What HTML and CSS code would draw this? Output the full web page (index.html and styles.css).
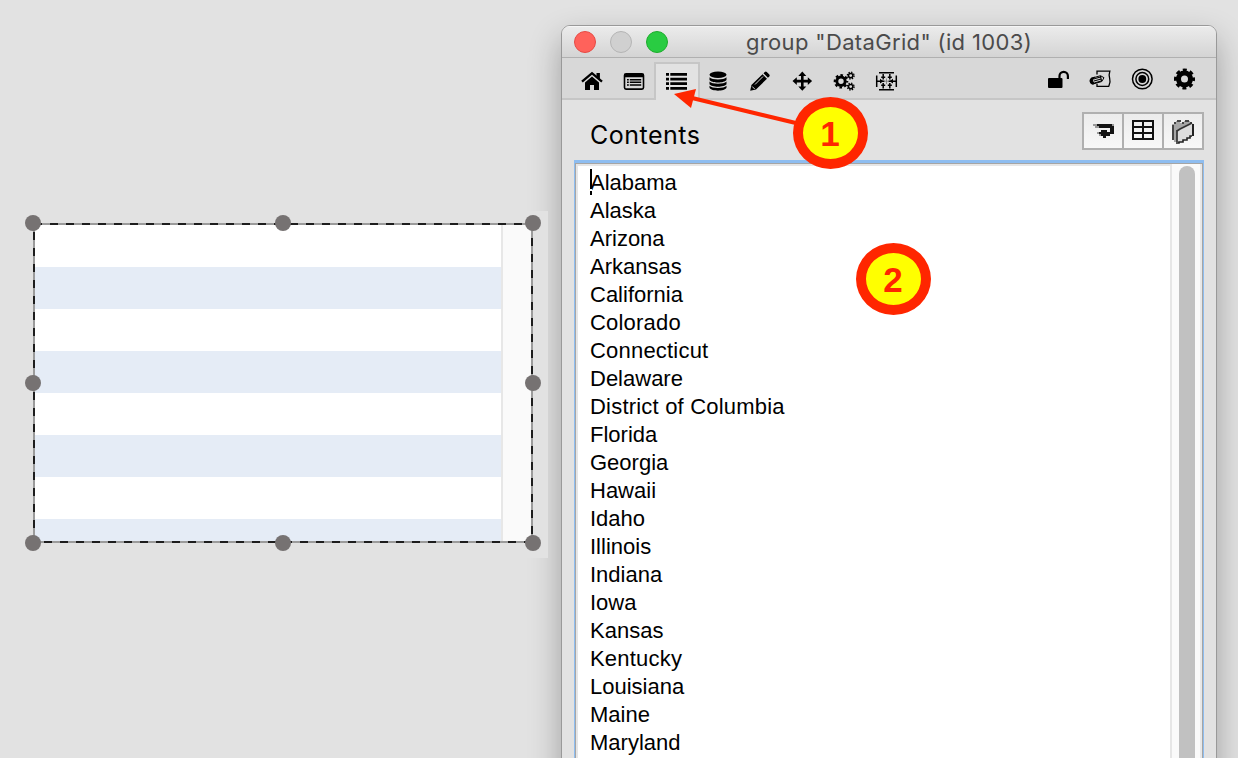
FILE: index.html
```
<!DOCTYPE html>
<html lang="en">
<head>
<meta charset="utf-8">
<title>group "DataGrid" (id 1003)</title>
<link rel="stylesheet" href="styles.css">
</head>
<body>
<main class="desktop">
  <section class="inspector">
    <header class="titlebar">
      <div class="lights"><i class="light close"></i><i class="light minimize"></i><i class="light expand"></i></div>
      <h1 class="title">group "DataGrid" (id 1003)</h1>
    </header>
    <nav class="toolbar">
      <div class="tools">
        <span class="tool"><svg viewBox="0 0 24 24"><path d="M2 12.700 12 4.200 22 12.700" fill="none" stroke="#000" stroke-width="2.400"/><path d="M16.500 4h3.400v7l-3.400-3z"/><path d="M5 13.500 12 7.500l7 6V21h-5v-5h-4v5H5z"/></svg></span>
        <span class="tool"><svg viewBox="0 0 24 24"><rect x="2.500" y="4.900" width="19" height="15.200" rx="1.500" fill="none" stroke="#000" stroke-width="1.600"/><path d="M2.500 5h19v3.200h-19zM5 10h1.800v1.500H5zM5 12.600h1.800v1.500H5zM5 15.300h1.800v1.500H5zM7.800 10h11.400v1.500H7.800zM7.800 12.600h11.400v1.500H7.800zM7.800 15.300h11.400v1.500H7.800z"/></svg></span>
        <span class="tool active"><svg viewBox="0 0 24 24"><path d="M2 4h3v2.700H2zM2 8.700h3v2.700H2zM2 13.300h3V16H2zM2 18h3v2.700H2zM6.300 4H23v2.700H6.300zM6.300 8.700H23v2.700H6.300zM6.300 13.300H23V16H6.300zM6.300 18H23v2.700H6.300z"/></svg></span>
        <span class="tool"><svg viewBox="0 0 24 24"><ellipse cx="12" cy="5.800" rx="8.500" ry="3.200"/><path d="M3.500 8.200c2.500 3 14.500 3 17 0v2.700c-2 3.300-15 3.300-17 0zM3.500 12.500c2.500 3 14.500 3 17 0v2.700c-2 3.300-15 3.300-17 0zM3.500 16.800c2.500 3 14.500 3 17 0v2c-2 3.800-15 3.800-17 0z"/></svg></span>
        <span class="tool"><svg viewBox="0 0 24 24"><path d="m14.500 5.200 4.500 4.500L8 20.500l-5.800 1.300 1.200-5.700zM15.500 4.300l1.300-1.300q1-.8 2 0l2.500 2.500q.8 1 0 2L19.900 8.800z"/><path d="m7 15.500 8-8M4.200 17.500l2.500 2.500" stroke="#d8d8d8" stroke-width="1"/></svg></span>
        <span class="tool"><svg viewBox="0 0 24 24"><path d="m12.300 2.500 4 4.500h-2.700v3.800H17.800V8.300l4.300 3.800-4.300 3.800v-2.500h-4.200v4h2.700l-4 4.300-4-4.300H11v-4H6.800v2.500l-4.300-3.800 4.300-3.800v2.500H11V7H8.300z"/></svg></span>
        <span class="tool"><svg viewBox="0 0 24 24"><circle cx="9" cy="12.300" r="4.200" fill="none" stroke="#000" stroke-width="3"/><circle cx="9" cy="12.300" r="6.200" fill="none" stroke="#000" stroke-width="2.200" stroke-dasharray="2.600 2.270" stroke-dashoffset="1.300"/><g fill="none" stroke="#000"><circle cx="18.700" cy="6.600" r="2.200" stroke-width="1.500"/><circle cx="18.700" cy="6.600" r="3.400" stroke-width="1.300" stroke-dasharray="1.350 1.320"/><circle cx="18.700" cy="17.600" r="2.200" stroke-width="1.500"/><circle cx="18.700" cy="17.600" r="3.400" stroke-width="1.300" stroke-dasharray="1.350 1.320"/></g></svg></span>
        <span class="tool"><svg viewBox="0 0 24 24"><g fill="none" stroke="#000"><path d="M2.700 6.500v11.500M22.300 6.500v11.500M5 3.700h15M5 20.800h15" stroke-width="1.500"/><path d="M3 12.200h7.500M14.500 12.200H22M9.200 5v5.500M15.800 5v5.500M9.200 14v5.500M15.800 14v5.500" stroke-width="1.500"/><path d="M7.200 8.200h4M13.800 8.200h4M7.200 16.200h4M13.800 16.200h4" stroke-width="1.500"/></g><path d="m6 9.800 3.500 2.400L6 14.600zM19 9.800l-3.500 2.400 3.500 2.400z"/><path d="M12.500 9.500v5.500M10.500 12.200h4" stroke="#777" stroke-width=".8"/></svg></span>
      </div>
      <div class="tools end">
        <span class="tool"><svg viewBox="0 0 24 24"><rect x="2" y="12" width="14.500" height="10" rx="1"/><path d="M13.500 12.500V10a4.200 4.200 0 0 1 8.400 0v3" fill="none" stroke="#000" stroke-width="2.200"/></svg></span>
        <span class="tool"><svg viewBox="0 0 24 24"><path d="M9 8.500V5.200h12.800c-1 3-1 5-.1 7.500 1 3-.1 5-1 7.600H9v-2.500" fill="none" stroke="#000" stroke-width="1.300"/><path d="m3.500 12.300 9-2.600 3.500 2-2.200 3.800-9 2.500c-3-.4-3.200-4.700-1.300-5.700z" fill="#d8d8d8" stroke="#000"/><path d="M3.500 12.300c-2.500 2-1 5.700 1.300 5.700l1.500-.5c-2-1.500-2.300-3.800-.8-5.800zM5.500 13l7-2M6 15l7-2M6.500 17l6.500-2M12.500 10l1 5" stroke="#000" stroke-width="1.200"/></svg></span>
        <span class="tool"><svg viewBox="0 0 24 24"><g fill="none" stroke="#000" stroke-width="1.500"><circle cx="12.300" cy="13" r="9.800"/><circle cx="12.300" cy="13" r="6.400"/></g><circle cx="12.300" cy="13" r="3.900"/></svg></span>
        <span class="tool"><svg viewBox="0 0 24 24"><circle cx="12.500" cy="13" r="6" fill="none" stroke="#000" stroke-width="5"/><circle cx="12.500" cy="13" r="8.900" fill="none" stroke="#000" stroke-width="3.200" stroke-dasharray="3.900 3.090" stroke-dashoffset="1.950"/></svg></span>
      </div>
    </nav>
    <div class="heading">
      <h2 class="label">Contents</h2>
      <div class="segments">
        <span class="segment"><svg viewBox="0 0 36 34" shape-rendering="crispEdges"><path d="M12 10h15v2h2v8h-4v2h-4v2h-3v-2h-2v-2h-2v-2h2v-2h6v2h3v-4H14v-2h-2z" fill="#141414"/><path d="M8 10h4v2H8zM10 12h4v2h-4zM12 18h2v2h-2zM14 20h2v2h-2zM27 10h2v2h-2z" fill="#999"/></svg></span>
        <span class="segment"><svg viewBox="0 0 36 34" shape-rendering="crispEdges"><path d="M8 7h20v18H8zM18 7v18M8 13h20M8 19h20" fill="none" stroke="#111" stroke-width="2"/></svg></span>
        <span class="segment"><svg viewBox="0 0 36 34"><path d="M8 10h2V8h2V7h4v2h4V7h6v2h2v2l-7 2-6 3-2 2v10h-3v-2H8z" fill="#a6a6a6"/><path d="M9 11v15M10 9h2M13 7h4M18 9h2M21 7h4M26 9h2" stroke="#444" stroke-width="2" fill="none"/><path d="M13 18l3-3 6-3 6-3v14l-6 2-4 3-5 1z" fill="#ddd"/><path d="M13 16v12M13 17l3-2 4-2 4-2 4-2" stroke="#333" stroke-width="1.700" fill="none"/><path d="M29 10v12" stroke="#222" stroke-width="2"/><path d="M28 22h-2v2h-3v2h-4v2h-4v1h-3" stroke="#222" stroke-width="1.600" fill="none"/></svg></span>
      </div>
    </div>
    <div class="field">
      <ul class="states">
        <li>Alabama</li><li>Alaska</li><li>Arizona</li><li>Arkansas</li><li>California</li><li class="loose">Colorado</li><li class="loose">Connecticut</li><li>Delaware</li><li class="loose">District of Columbia</li><li>Florida</li><li>Georgia</li><li>Hawaii</li><li>Idaho</li><li>Illinois</li><li>Indiana</li><li>Iowa</li><li>Kansas</li><li class="loose">Kentucky</li><li>Louisiana</li><li>Maine</li><li>Maryland</li>
      </ul>
      <i class="caret"></i>
      <div class="scrollbar"><div class="thumb"></div></div>
    </div>
  </section>

  <section class="canvas">
    <div class="datagrid"><div class="rows"></div><div class="gutter"></div></div>
    <svg class="handles" width="524" height="344" viewBox="23 212 524 344">
      <g fill="none" stroke="#9b9b9b" stroke-width="2"><path d="M33 224H533M33 542H533M34 223V543M532 223V543"/></g>
      <g fill="none" stroke="#1d1d1d" stroke-width="2" stroke-dasharray="8 8"><path d="M34 224H533" /><path d="M28 542H533"/><path d="M34 232V543"/><path d="M532 238V543"/></g>
      <g fill="#767272"><circle cx="33" cy="223" r="8"/><circle cx="283" cy="223" r="8"/><circle cx="533" cy="223" r="8"/><circle cx="33" cy="383" r="8"/><circle cx="533" cy="383" r="8"/><circle cx="33" cy="543" r="8"/><circle cx="283" cy="543" r="8"/><circle cx="533" cy="543" r="8"/></g>
    </svg>
  </section>

  <svg class="arrow" width="140" height="50" viewBox="670 80 140 50"><path d="M690 97.500 800 124" stroke="#ff2600" stroke-width="4"/><path d="m674 94 22-5-5 19z" fill="#ff2600"/></svg>
  <b class="step one">1</b>
  <b class="step two">2</b>
</main>
</body>
</html>
```
FILE: styles.css
```
* { box-sizing: border-box; }
body { margin: 0; overflow: hidden; background: #e2e2e2; }
.desktop { position: relative; width: 1238px; height: 758px; overflow: hidden; background: #e2e2e2; }

.inspector {
  position: absolute; left: 561px; top: 25px; width: 656px; height: 780px;
  display: flex; flex-direction: column;
  border: 1px solid #999; border-radius: 9px 9px 0 0; overflow: hidden;
  background: #e2e2e2; box-shadow: 0 14px 32px rgba(0,0,0,.3);
}
.titlebar {
  position: relative; flex: none; height: 32px; display: flex; align-items: center; justify-content: center;
  background: linear-gradient(#ebebeb, #d4d4d4); border-top: 1px solid #f6f6f6; border-bottom: 1px solid #b0b0b0;
}
.lights { position: absolute; left: 12px; top: 4px; display: flex; gap: 14px; }
.light { width: 22px; height: 22px; border-radius: 50%; border: 1px solid; }
.close { background: #ff625b; border-color: #e54b45; }
.minimize { background: #d0d0d0; border-color: #b4b4b4; }
.expand { background: #29cc42; border-color: #1eac2e; }
.title { margin: 0; font: 400 22px/30px Inter, sans-serif; letter-spacing: .35px; color: #4b4b4b; white-space: nowrap; }

.toolbar { flex: none; height: 42px; padding: 4px 11px 0 9px; display: flex; justify-content: space-between; background: #d8d8d8; border-bottom: 2px solid #c6c6c6; }
.tools { display: flex; }
.tool { width: 42px; height: 38px; padding: 7px 9px 0; }
.tool svg { display: block; width: 24px; height: 24px; }
.end .tool { padding-top: 4px; }
.active { width: 46px; height: 38px; margin: 0 -3px 0 -1px; padding: 5px 8px 0; border: 2px solid #c6c6c6; border-bottom: 0; background: #e2e2e2; }

.heading { flex: none; height: 60px; padding: 12px 12px 0 28px; display: flex; justify-content: space-between; align-items: flex-start; }
.label { margin: 8px 0 0; font: 400 25px/30px Inter, sans-serif; letter-spacing: .5px; color: #000; }
.segments { display: flex; gap: 2px; padding: 2px; height: 38px; background: #b0b0b0; }
.segment { width: 38px; height: 34px; background: linear-gradient(#ececec, #f8f8f8); }
.segment svg { display: block; width: 36px; height: 34px; margin-left: 1px; }
.segment:last-child svg { margin-left: 0; }

.field {
  position: relative; flex: none; width: 630px; height: 620px; margin-left: 12px; display: flex;
  border: solid #8ebdf0; border-width: 3px 1px 0; background: #fff;
  box-shadow: inset 1px 1px #a5a5a5, inset -1px 0 #a5a5a5, inset 3px 3px #e6e6e6, inset -3px 0 #e8e8e8;
}
.states { flex: 1; margin: 0; padding: 6px 0 0 15px; list-style: none; font: 400 22px/28px "Liberation Sans", Arial, sans-serif; color: #000; }
.loose { letter-spacing: .2px; }
.caret { position: absolute; left: 15px; top: 6px; width: 2px; height: 26px; background: linear-gradient(#000 20px, #fff 20px 22px, #000 22px); }
.scrollbar { width: 30px; margin: 1px 3px 0 0; padding: 2px 0 0 7px; background: #fafafa; border-left: 2px solid #e6e6e6; }
.thumb { width: 16px; height: 620px; border-radius: 8px; background: #c1c1c1; }

.canvas { position: absolute; left: 23px; top: 211px; width: 525px; height: 347px; background: linear-gradient(90deg, transparent 400px, #e2e2e2 400px); }
.datagrid { display: flex; width: 498px; height: 318px; margin: 14px 0 0 12px; }
.rows { width: 466px; background: repeating-linear-gradient(#fff 0 42px, #e5ecf6 42px 84px); }
.gutter { flex: 1; background: #fafafa; border-left: 2px solid #e7e7e7; border-right: 2px solid #eee; }
.handles { position: absolute; left: 0; top: 1px; }

.arrow { position: absolute; left: 670px; top: 80px; }
.step {
  position: absolute; width: 75px; height: 72px; border: 10px solid #ff2600; border-radius: 50%; background: #ff0;
  display: flex; align-items: center; justify-content: center; padding: 2px 1px 0 0; font: 700 35px/52px "Liberation Sans", Arial, sans-serif; color: #ff2600;
}
.one { left: 793px; top: 97px; }
.two { left: 856px; top: 243px; }
```
